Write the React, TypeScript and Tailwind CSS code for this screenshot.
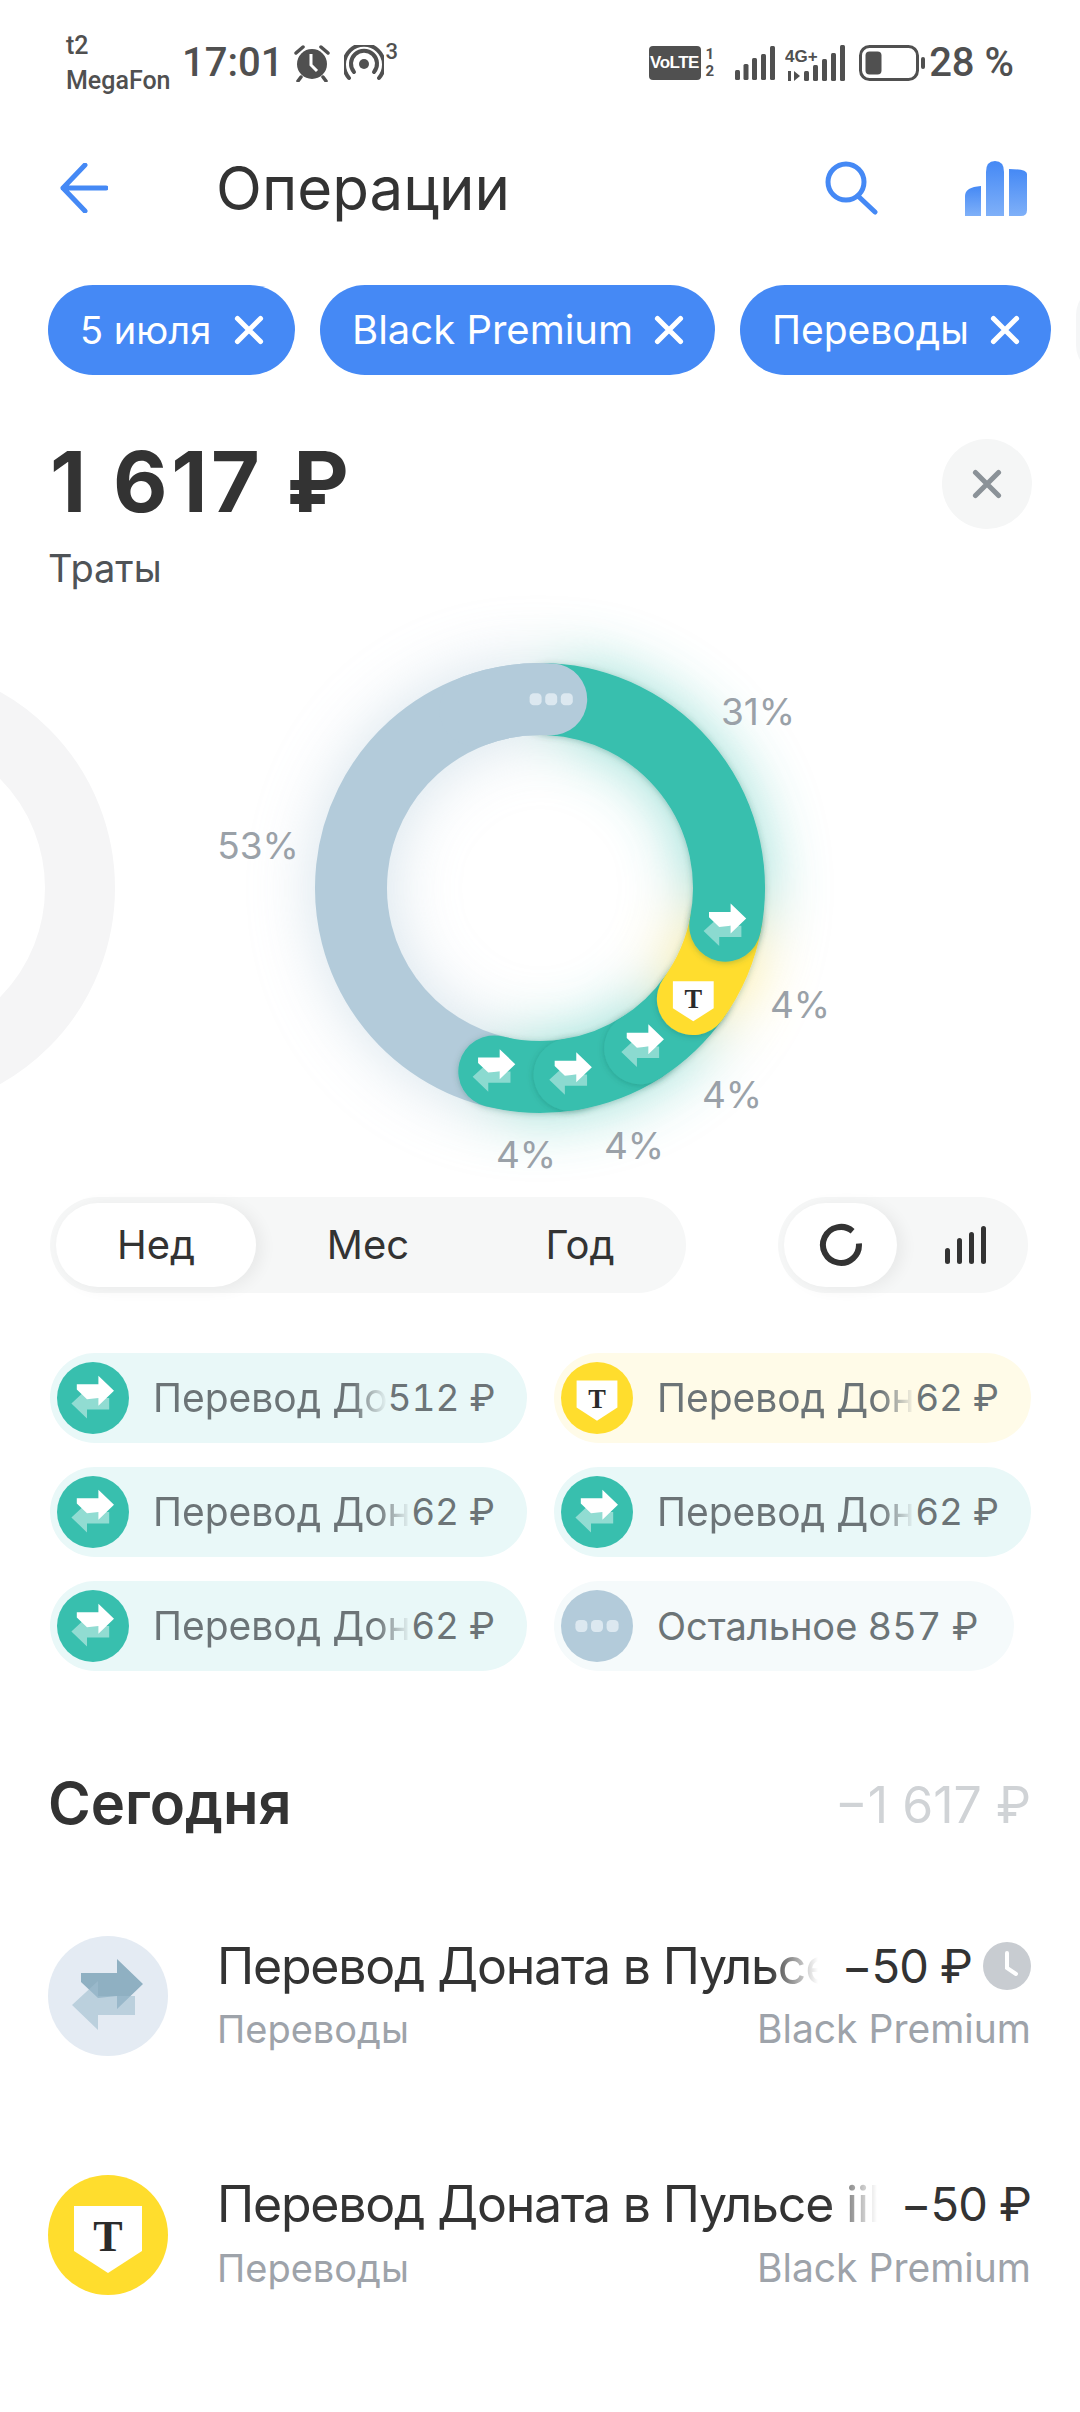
import React from 'react';

const CX = 540;
const CY = 269; // donut centre inside the 560px tall chart svg
const R = 189;

const arc = (from: number, to: number) => {
  const pt = (a: number) => {
    const rad = ((a - 90) * Math.PI) / 180;
    return `${(CX + R * Math.cos(rad)).toFixed(2)} ${(CY + R * Math.sin(rad)).toFixed(2)}`;
  };
  const large = to - from > 180 ? 1 : 0;
  return `M${pt(from)}A${R} ${R} 0 ${large} 1 ${pt(to)}`;
};

const polar = (a: number) => {
  const rad = ((a - 90) * Math.PI) / 180;
  return { x: CX + R * Math.cos(rad), y: CY + R * Math.sin(rad) };
};

const TEAL = '#38bfae';
const YELLOW = '#ffdd2d';
const SLATE = '#b3cbda';

const segments = [
  { from: 192, to: 360, color: SLATE },
  { from: 170, to: 194, color: TEAL },
  { from: 147, to: 171, color: TEAL },
  { from: 125, to: 148, color: TEAL },
  { from: 100, to: 126, color: YELLOW },
  { from: 3, to: 101.5, color: TEAL },
];

const Arrows: React.FC<{ front: string; back: string }> = ({ front, back }) => (
  <g>
    <path d="M33 37H69V23L95 48L69 73V60L50 62L33 46Z" fill={front} />
    <path d="M24 69L50 45V60H87V79H50V94Z" fill={back} />
  </g>
);

const Shield: React.FC = () => (
  <g>
    <path d="M26 31H94V76L60 98L26 76Z" fill="#fff" />
    <text x="60" y="76" textAnchor="middle" fontFamily="'Liberation Serif', serif" fontWeight="700" fontSize="44" fill="#2b2b2b">
      Т
    </text>
  </g>
);

const Dots: React.FC<{ fill: string }> = ({ fill }) => (
  <g fill={fill}>
    <rect x="24" y="50" width="20" height="20" rx="7" />
    <rect x="50" y="50" width="20" height="20" rx="7" />
    <rect x="76" y="50" width="20" height="20" rx="7" />
  </g>
);

// 120 unit tile: circle plus a glyph, reused at 72px and 120px
const Badge: React.FC<{ kind: 'transfer' | 'tbank' | 'other' | 'pending'; size: number }> = ({ kind, size }) => {
  const bg = { transfer: TEAL, tbank: YELLOW, other: SLATE, pending: '#e4ebf3' }[kind];
  return (
    <svg width={size} height={size} viewBox="0 0 120 120" className="shrink-0">
      <circle cx="60" cy="60" r="60" fill={bg} />
      {kind === 'transfer' && <Arrows front="#fff" back="rgba(255,255,255,0.45)" />}
      {kind === 'pending' && <Arrows front="#8fb0c2" back="rgba(160,190,207,0.6)" />}
      {kind === 'tbank' && <Shield />}
      {kind === 'other' && <Dots fill="#dce8f0" />}
    </svg>
  );
};

const Chart: React.FC = () => {
  const icons: { a: number; kind: string }[] = [
    { a: 101.5, kind: 'transfer' },
    { a: 125.8, kind: 'tbank' },
    { a: 147, kind: 'transfer' },
    { a: 170.6, kind: 'transfer' },
    { a: 194, kind: 'transfer' },
  ];
  const labels = [
    { x: 758, y: 105, t: '31%' },
    { x: 258, y: 239, t: '53%' },
    { x: 800, y: 398, t: '4%' },
    { x: 732, y: 488, t: '4%' },
    { x: 634, y: 539, t: '4%' },
    { x: 526, y: 548, t: '4%' },
  ];
  return (
    <svg width="1080" height="560" viewBox="0 0 1080 560" className="block overflow-visible">
      <defs>
        <filter id="glow" x="150" y="-120" width="780" height="780" filterUnits="userSpaceOnUse">
          <feGaussianBlur stdDeviation="32" />
        </filter>
        <filter id="cap" x="200" y="-80" width="680" height="700" filterUnits="userSpaceOnUse">
          <feDropShadow dx="0" dy="1" stdDeviation="3" floodColor="#0b4f47" floodOpacity="0.28" />
        </filter>
      </defs>
      <circle cx="-110" cy={CY} r="190" fill="none" stroke="#f5f5f6" strokeWidth="70" />
      <g filter="url(#glow)" opacity="0.55" fill="none" strokeWidth="72">
        {segments.map((s, i) => (
          <path key={i} d={arc(s.from, s.to)} stroke={s.color} />
        ))}
      </g>
      {segments.map((s, i) => (
        <path
          key={i}
          d={arc(s.from, s.to)}
          stroke={s.color}
          fill="none"
          strokeWidth="72"
          strokeLinecap="round"
          filter={i > 0 ? 'url(#cap)' : undefined}
        />
      ))}
      {/* slate end goes back on top of the long teal arc */}
      <path d={arc(340, 363.4)} stroke={SLATE} fill="none" strokeWidth="72" strokeLinecap="round" />
      <g transform={`translate(${polar(3.4).x - 36} ${polar(3.4).y - 36}) scale(0.6)`}>
        <Dots fill="#dce8f0" />
      </g>
      {icons.map((ic, i) => {
        const p = polar(ic.a);
        return (
          <g key={i} transform={`translate(${p.x - 36} ${p.y - 36}) scale(0.6)`}>
            {ic.kind === 'tbank' ? <Shield /> : <Arrows front="#fff" back="rgba(255,255,255,0.42)" />}
          </g>
        );
      })}
      {labels.map((l, i) => (
        <text key={i} x={l.x} y={l.y + 1} textAnchor="middle" fontSize="37" fill="#9aa1a8" fontFamily="Inter, sans-serif">
          {l.t}
        </text>
      ))}
    </svg>
  );
};

const XMark: React.FC<{ className?: string; stroke?: string }> = ({ className, stroke = '#fff' }) => (
  <svg viewBox="0 0 26 26" className={className}>
    <path d="M3 3L23 23M23 3L3 23" stroke={stroke} strokeWidth="4.4" strokeLinecap="round" fill="none" />
  </svg>
);

const Chip: React.FC<{ label: string; className: string }> = ({ label, className }) => (
  <div className={`h-[90px] shrink-0 rounded-full bg-[#4589f5] flex items-center justify-between pl-[32px] pr-[31px] text-white ${className}`}>
    <span className="whitespace-nowrap">{label}</span>
    <XMark className="w-[30px] h-[30px] shrink-0" />
  </div>
);

const LegendChip: React.FC<{
  kind: 'transfer' | 'tbank' | 'other';
  label: string;
  amount: string;
  className: string;
}> = ({ kind, label, amount, className }) => (
  <div className={`h-[90px] rounded-full flex items-center pl-[7px] text-[#6c7477] ${className}`}>
    <Badge kind={kind} size={72} />
    {kind === 'other' ? (
      <span className="ml-[24px] text-[38px] tabular-nums whitespace-nowrap">
        {label} {amount}
      </span>
    ) : (
      <>
        <span className="ml-[24px] text-[39px] whitespace-nowrap [mask-image:linear-gradient(to_left,transparent,black_34px)]">{label}</span>
        <span className="ml-auto text-[37px] tabular-nums whitespace-nowrap">{amount}</span>
      </>
    )}
  </div>
);

const Row: React.FC<{
  kind: 'tbank' | 'pending';
  title: string;
  amount: string;
  pending?: boolean;
  className?: string;
}> = ({ kind, title, amount, pending, className }) => (
  <div className={`flex items-center ${className ?? ''}`}>
    <Badge kind={kind} size={120} />
    <div className="ml-[49px] flex-1 min-w-0 pt-[3px]">
      <div className="flex items-center h-[58px] text-[#333333]">
        <span className="flex-1 min-w-0 overflow-hidden text-[50px] tracking-[-1.2px] whitespace-nowrap [mask-image:linear-gradient(to_left,transparent,black_50px)]">
          {title}
        </span>
        <span className="ml-[24px] text-[47px] tracking-[-1px] whitespace-nowrap">{amount}</span>
        {pending && (
          <svg width="48" height="48" viewBox="0 0 48 48" className="ml-[11px] shrink-0">
            <circle cx="24" cy="24" r="24" fill="#c8ccd1" />
            <path d="M24 11V26L33 32" stroke="#fff" strokeWidth="4" fill="none" strokeLinecap="round" />
          </svg>
        )}
      </div>
      <div className="flex justify-between items-baseline mt-[5px] text-[38px] text-[#9ea3aa]">
        <span>Переводы</span>
        <span className="text-[39px]">Black Premium</span>
      </div>
    </div>
  </div>
);

const StatusBar: React.FC = () => (
  <div className="h-[126px] pl-[66px] pr-[66px] flex items-center justify-between text-[#505050] font-['Roboto',sans-serif]">
    <div className="flex items-center">
      <div className="text-[25px] leading-[35px] font-medium w-[116px]">
        <div>t2</div>
        <div>MegaFon</div>
      </div>
      <span className="text-[40px] font-medium">17:01</span>
      <svg width="38" height="38" viewBox="0 0 38 38" className="ml-[10px]">
        <circle cx="19" cy="20" r="15" fill="#505050" />
        <path d="M3 9L10 3M35 9L28 3M8 33L5 37M30 33L33 37" stroke="#505050" strokeWidth="3.5" strokeLinecap="round" />
        <path d="M18 10V21L24 27" stroke="#fff" strokeWidth="3" fill="none" />
      </svg>
      <svg width="40" height="36" viewBox="0 0 40 36" className="ml-[13px]">
        <circle cx="20" cy="19" r="5" fill="#505050" />
        <path d="M10 27A13 13 0 1 1 30 27" stroke="#505050" strokeWidth="4" fill="none" strokeLinecap="round" />
        <path d="M5 33A20 20 0 1 1 35 33" stroke="#505050" strokeWidth="4" fill="none" strokeLinecap="round" />
      </svg>
      <span className="text-[22px] font-medium self-start mt-[14px] ml-[1px] leading-[20px]">3</span>
    </div>
    <div className="flex items-center">
      <div className="w-[52px] h-[34px] rounded-[4px] bg-[#505050] text-white text-[17px] font-bold flex items-center justify-center font-['Liberation_Sans',sans-serif] tracking-[-0.5px]">
        VoLTE
      </div>
      <div className="ml-[5px] text-[15px] leading-[17px] font-bold">
        <div>1</div>
        <div>2</div>
      </div>
      <svg width="40" height="34" viewBox="0 0 40 34" className="ml-[21px]">
        <g fill="#505050">
          <rect x="0" y="24" width="5" height="10" rx="1.5" />
          <rect x="8.5" y="18" width="5" height="16" rx="1.5" />
          <rect x="17" y="12" width="5" height="22" rx="1.5" />
          <rect x="26" y="8" width="5" height="26" rx="1.5" />
          <rect x="35" y="0" width="5" height="34" rx="1.5" />
        </g>
      </svg>
      <svg width="60" height="36" viewBox="0 0 60 36" className="ml-[10px]">
        <text x="0" y="17" fontSize="17" fontWeight="700" fill="#505050" fontFamily="'Liberation Sans', sans-serif">
          4G+
        </text>
        <g fill="#505050">
          <rect x="3" y="26" width="3" height="10" />
          <path d="M9 26L15 31L9 36Z" />
          <rect x="19" y="26" width="5" height="10" rx="1.5" />
          <rect x="28" y="20" width="5" height="16" rx="1.5" />
          <rect x="37" y="14" width="5" height="22" rx="1.5" />
          <rect x="46" y="8" width="5" height="28" rx="1.5" />
          <rect x="55" y="0" width="5" height="36" rx="1.5" />
        </g>
      </svg>
      <svg width="66" height="36" viewBox="0 0 66 36" className="ml-[14px]">
        <rect x="1.5" y="1.5" width="57" height="33" rx="9" fill="none" stroke="#505050" strokeWidth="3" />
        <rect x="6.5" y="6.5" width="16" height="23" rx="4" fill="#505050" />
        <rect x="62" y="12" width="4" height="12" rx="2" fill="#505050" />
      </svg>
      <span className="ml-[4px] text-[40px] font-medium">28 %</span>
    </div>
  </div>
);

const App: React.FC = () => (
  <div className="w-[1080px] h-[2412px] overflow-hidden bg-white font-['Inter',sans-serif]">
    <StatusBar />

    {/* Шапка */}
    <div className="h-[124px] pl-[60px] pr-[53px] flex items-center">
      <svg width="48" height="50" viewBox="0 0 48 50">
        <path d="M46 25H3M25 2L3 25L25 48" stroke="#4589f5" strokeWidth="5" fill="none" strokeLinecap="round" strokeLinejoin="round" />
      </svg>
      <h1 className="ml-[108px] text-[60px] leading-none text-[#333333]">Операции</h1>
      <svg width="54" height="54" viewBox="0 0 54 54" className="ml-auto">
        <circle cx="21" cy="21" r="18" fill="none" stroke="#4589f5" strokeWidth="5" />
        <path d="M33 35L50 51" stroke="#4589f5" strokeWidth="5" strokeLinecap="round" />
      </svg>
      <svg width="62" height="56" viewBox="0 0 62 56" className="ml-[86px]">
        <defs>
          <linearGradient id="bars" x1="0" y1="0" x2="0" y2="1">
            <stop offset="0" stopColor="#4589f5" />
            <stop offset="1" stopColor="#7fb0f8" />
          </linearGradient>
        </defs>
        <path d="M0 56V36Q0 27 16 26V56Z" fill="url(#bars)" />
        <path d="M21 56V12Q21 1 30 1T39 12V56Z" fill="url(#bars)" />
        <path d="M44 9Q62 9 62 14V50Q62 56 56 56H44Z" fill="url(#bars)" />
      </svg>
    </div>

    {/* Фильтры */}
    <div className="mt-[35px] pl-[48px] flex gap-[25px] overflow-hidden">
      <Chip label="5 июля" className="w-[247px] text-[38px]" />
      <Chip label="Black Premium" className="w-[395px] text-[40px]" />
      <Chip label="Переводы" className="w-[311px] text-[39px]" />
      <div className="w-[60px] h-[90px] rounded-full bg-[#f5f6f7] shrink-0" />
    </div>

    <div className="mt-[57px] pl-[50px] pr-[48px] flex justify-between items-start">
      <div>
        <div className="text-[84px] leading-[100px] font-bold tracking-[3.5px] text-[#333333]">1 617 ₽</div>
        <div className="mt-[11px] -ml-[2px] text-[38px] leading-[50px] text-[#4f5357]">Траты</div>
      </div>
      <div className="mt-[7px] w-[90px] h-[90px] rounded-full bg-[#f5f6f6] flex items-center justify-center">
        <XMark className="w-[30px] h-[30px]" stroke="#8b9298" />
      </div>
    </div>

    <div className="mt-[26px]">
      <Chart />
    </div>

    {/* Переключатели периода и вида */}
    <div className="mt-[18px] pl-[50px] pr-[52px] flex justify-between">
      <div className="w-[636px] h-[96px] rounded-full bg-[#f6f7f7] p-[6px] flex items-center text-[40px] text-[#333333]">
        <div className="w-[200px] h-[84px] rounded-full bg-white shadow-[6px_2px_16px_rgba(0,0,0,0.06)] flex items-center justify-center">Нед</div>
        <div className="w-[224px] text-center">Мес</div>
        <div className="w-[200px] text-center">Год</div>
      </div>
      <div className="w-[250px] h-[96px] rounded-full bg-[#f6f7f7] p-[6px] flex items-center">
        <div className="w-[113px] h-[84px] rounded-full bg-white shadow-[6px_2px_16px_rgba(0,0,0,0.06)] flex items-center justify-center">
          <svg width="44" height="44" viewBox="0 0 44 44">
            <path d="M39.9 20.4A18 18 0 1 1 33.6 8.2" stroke="#333" strokeWidth="6" fill="none" />
          </svg>
        </div>
        <svg width="42" height="38" viewBox="0 0 42 38" className="ml-[48px]">
          <g fill="#333">
            <rect x="0" y="22" width="5" height="16" rx="2.5" />
            <rect x="12" y="12" width="5" height="26" rx="2.5" />
            <rect x="24" y="6" width="5" height="32" rx="2.5" />
            <rect x="36" y="0" width="5" height="38" rx="2.5" />
          </g>
        </svg>
      </div>
    </div>

    {/* Легенда */}
    <div className="mt-[60px] pl-[50px] grid grid-cols-[477px_477px] gap-x-[27px] gap-y-[24px]">
      <LegendChip kind="transfer" label="Перевод До" amount="512 ₽" className="bg-[#e9f8f8] pr-[32px]" />
      <LegendChip kind="tbank" label="Перевод Дон" amount="62 ₽" className="bg-[#fffbe8] pr-[32px]" />
      <LegendChip kind="transfer" label="Перевод Дон" amount="62 ₽" className="bg-[#e9f8f8] pr-[32px]" />
      <LegendChip kind="transfer" label="Перевод Дон" amount="62 ₽" className="bg-[#e9f8f8] pr-[32px]" />
      <LegendChip kind="transfer" label="Перевод Дон" amount="62 ₽" className="bg-[#e9f8f8] pr-[32px]" />
      <LegendChip kind="other" label="Остальное" amount="857 ₽" className="bg-[#f5fafb] pr-[32px] w-[460px]" />
    </div>

    <div className="mt-[91px] pl-[48px] pr-[49px] flex justify-between items-center">
      <h2 className="text-[58px] leading-[80px] font-semibold text-[#333333]">Сегодня</h2>
      <span className="mt-[6px] text-[50px] text-[#d0d3d6]">−1 617 ₽</span>
    </div>

    <div className="mt-[91px] pl-[48px] pr-[49px]">
      <Row kind="pending" title="Перевод Доната в Пульсе" amount="−50 ₽" pending />
      <Row kind="tbank" title="Перевод Доната в Пульсе iiM" amount="−50 ₽" className="mt-[114px]" />
    </div>
  </div>
);

export default App;
